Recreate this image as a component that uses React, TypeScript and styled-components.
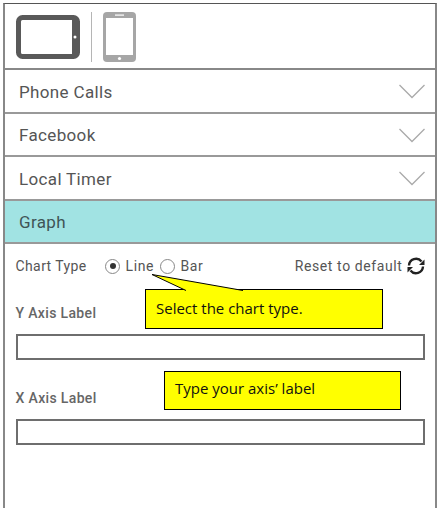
import React from "react";
import styled, { createGlobalStyle } from "styled-components";

const GlobalStyle = createGlobalStyle`
  html, body {
    margin: 0;
    background: #fff;
  }
`;

const menuItems = ["Phone Calls", "Facebook", "Local Timer"];

const Frame = styled.div`
  box-sizing: border-box;
  position: relative;
  width: 433.5px;
  height: 505px;
  margin: 3px 0 0 3px;
  border: solid #888;
  border-width: 1px 2px 0 2px;
  border-top-color: #555;
  font-family: "Roboto", "Liberation Sans", sans-serif;
  color: #555;
`;

const DeviceBar = styled.div`
  box-sizing: border-box;
  display: flex;
  align-items: center;
  height: 66px;
  padding: 1px 0 0 11px;
  border-bottom: 2px solid #888;
`;

const Divider = styled.div`
  width: 1.5px;
  height: 50px;
  margin: 0 11px 0 10.5px;
  background: #b5b5b5;
`;

const MenuRow = styled.div<{ $active?: boolean }>`
  box-sizing: border-box;
  display: flex;
  align-items: center;
  justify-content: space-between;
  height: 43.5px;
  padding: 2px 10px 0 14px;
  border-bottom: 2px solid #999;
  background: ${(p) => (p.$active ? "#a1e3e3" : "#fff")};
  font-size: 17px;
  letter-spacing: 0.35px;
  color: ${(p) => (p.$active ? "#3f5456" : "#555")};
`;

const Body = styled.div`
  padding: 0 10px 0 10.5px;
`;

const ChartRow = styled.div`
  display: flex;
  align-items: center;
  justify-content: space-between;
  height: 44px;
  font-size: 14px;
  letter-spacing: 0.6px;
`;

const ChartOptions = styled.div`
  display: flex;
  align-items: center;
`;

const ChartTitle = styled.span`
  width: 89.5px;
  letter-spacing: 0.4px;
`;

const Radio = styled.span<{ $checked?: boolean }>`
  box-sizing: border-box;
  display: flex;
  align-items: center;
  justify-content: center;
  width: 15px;
  height: 15px;
  margin-right: 5.5px;
  border: 1px solid #888;
  border-radius: 50%;
  &::after {
    content: "";
    display: ${(p) => (p.$checked ? "block" : "none")};
    width: 6px;
    height: 6px;
    border-radius: 50%;
    background: #333;
  }
`;

const RadioLabel = styled.span`
  margin-right: 6px;
`;

const ResetButton = styled.div`
  display: flex;
  align-items: center;
  gap: 4px;
`;

const FieldLabel = styled.div`
  height: 20px;
  margin-top: 15px;
  font-size: 14px;
  font-weight: 500;
  letter-spacing: 0.35px;
  line-height: 20px;
  color: #666;
`;

const TextBox = styled.div`
  box-sizing: border-box;
  height: 26px;
  margin-top: 11px;
  border: 2px solid #6e6e6e;
`;

const SecondLabel = styled(FieldLabel)`
  margin-top: 28px;
`;

const Callout = styled.div<{ $left: number; $top: number; $width: number; $height: number }>`
  box-sizing: border-box;
  position: absolute;
  left: ${(p) => p.$left}px;
  top: ${(p) => p.$top}px;
  width: ${(p) => p.$width}px;
  height: ${(p) => p.$height}px;
  padding-left: 10px;
  border: 1px solid #000;
  background: #ff0;
  font-family: "Open Sans", "Liberation Sans", sans-serif;
  font-size: 15px;
  color: #111;
`;

const CalloutText = styled.div<{ $pad: number }>`
  padding-top: ${(p) => p.$pad}px;
  line-height: 19px;
`;

const CalloutTail = styled.svg`
  position: absolute;
  left: -1px;
  top: -17px;
  overflow: visible;
`;

const Tablet = () => (
  <svg width="64" height="44" viewBox="0 0 64 44">
    <rect x="2.5" y="2.5" width="59" height="39" rx="4" fill="#fff" stroke="#595959" strokeWidth="5" />
    <rect x="56" y="3" width="6" height="38" fill="#595959" />
    <circle cx="59" cy="22" r="1.5" fill="#fff" />
  </svg>
);

const Phone = () => (
  <svg width="33" height="50" viewBox="0 0 33 50">
    <rect x="0" y="0" width="33" height="50" rx="4" fill="#a6a6a6" />
    <rect x="3" y="6" width="27" height="37" fill="#fff" />
    <rect x="12" y="2.5" width="9" height="1.2" fill="#fff" />
    <circle cx="16.5" cy="46.5" r="1.6" fill="#fff" />
  </svg>
);

const Chevron = () => (
  <svg width="26" height="15" viewBox="0 0 26 15">
    <path d="M0.5 1 L13 13.5 L25.5 1" fill="none" stroke="#aaa" strokeWidth="1.3" />
  </svg>
);

const ResetIcon = () => (
  <svg width="18" height="18" viewBox="0 0 18 18">
    <path d="M2 8.5 A7 7 0 0 1 14.5 4.5" fill="none" stroke="#222" strokeWidth="2.4" />
    <path d="M16 9.5 A7 7 0 0 1 3.5 13.5" fill="none" stroke="#222" strokeWidth="2.4" />
    <path d="M17.5 2.5 V8 H12 Z" fill="#222" />
    <path d="M0.5 15.5 V10 H6 Z" fill="#222" />
  </svg>
);

const App = () => (
  <>
    <GlobalStyle />
    <Frame>
      <DeviceBar>
        <Tablet />
        <Divider />
        <Phone />
      </DeviceBar>
      {menuItems.map((item) => (
        <MenuRow key={item}>
          {item}
          <Chevron />
        </MenuRow>
      ))}
      <MenuRow $active>Graph</MenuRow>
      <Body>
        <ChartRow>
          <ChartOptions>
            <ChartTitle>Chart Type</ChartTitle>
            <Radio $checked />
            <RadioLabel>Line</RadioLabel>
            <Radio />
            <RadioLabel>Bar</RadioLabel>
          </ChartOptions>
          <ResetButton>
            Reset to default
            <ResetIcon />
          </ResetButton>
        </ChartRow>
        <FieldLabel>Y Axis Label</FieldLabel>
        <TextBox />
        <SecondLabel>X Axis Label</SecondLabel>
        <TextBox />
      </Body>
      <Callout $left={140} $top={285} $width={238} $height={40}>
        <CalloutTail width="100" height="18">
          <path d="M41 17.5 L7 1.5 L98 17.5" fill="#ff0" stroke="#000" strokeWidth="1" />
        </CalloutTail>
        <CalloutText $pad={9}>Select the chart type.</CalloutText>
      </Callout>
      <Callout $left={159} $top={367} $width={237} $height={39}>
        <CalloutText $pad={7}>Type your axis’ label</CalloutText>
      </Callout>
    </Frame>
  </>
);

export default App;
